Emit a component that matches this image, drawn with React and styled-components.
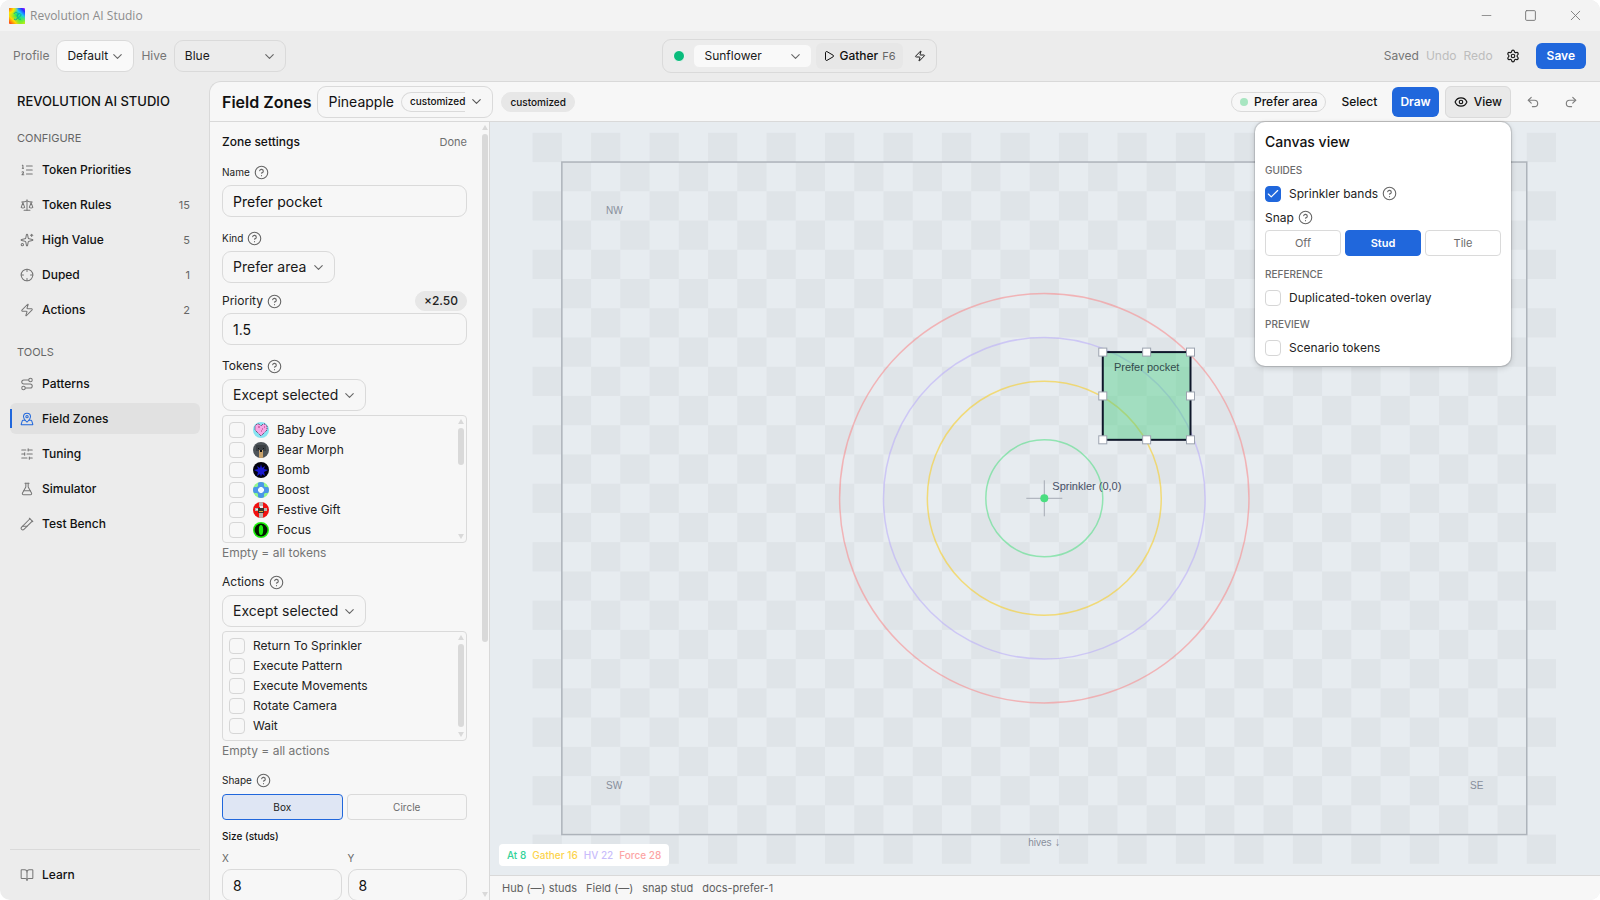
import React, {useState} from 'react';
import styled, {createGlobalStyle} from 'styled-components';
import {
    BookOpen, Check, ChevronDown, CircleQuestionMark, Crosshair, Eye, FlaskConical, ListOrdered, MapPinned,
    Minus, Play, Redo2, Route, Scale, Settings, SlidersHorizontal, Sparkles, Square, TestTubeDiagonal,
    Undo2, X, Zap
} from 'lucide-react';

const GlobalStyle = createGlobalStyle`
  *, *::before, *::after {box-sizing: border-box;}
  html, body {margin: 0; background: #fff;}
  body {
    font-family: Inter, "Liberation Sans", sans-serif;
    font-size: 12px;
    line-height: 16px;
    color: #111;
  }
  h1, h2, h3 {margin: 0; font-weight: 500;}
  p, ul {margin: 0; padding: 0; list-style: none;}
  button, input, select {font: inherit; color: inherit;}
  button {cursor: pointer;}
  a {color: inherit; text-decoration: none;}
  svg {flex: none; display: block;}
`;

const Window = styled.div`
  display: flex;
  flex-direction: column;
  height: 100vh;
  overflow: hidden;
  border-radius: 10px;
  background: #ececec;
`;

const TitleBar = styled.div`
  display: flex;
  align-items: center;
  gap: 5px;
  height: 31px;
  padding: 0 16px 0 9px;
  background: #f3f3f3;
  color: #8c8c8c;
  font-family: "Open Sans", "Noto Sans", sans-serif;
`;

const WindowButtons = styled.div`
  display: flex;
  gap: 30px;
  margin-left: auto;
`;

const WindowButton = styled.button`
  padding: 0;
  border: 0;
  background: none;
  color: #777;
`;

const TopBar = styled.header`
  display: grid;
  grid-template-columns: 1fr auto 1fr;
  align-items: center;
  height: 50px;
  padding: 0 14px 0 13px;
`;

const BarGroup = styled.div`
  display: flex;
  align-items: center;
  gap: 7px;
  color: #757575;
  justify-content: ${p => p.$end ? 'flex-end' : 'flex-start'};
`;

const SelectWrap = styled.span`
  position: relative;
  display: inline-flex;
  align-items: center;
  width: ${p => p.$width || 'auto'};

  svg {
    position: absolute;
    right: 9px;
    color: #666;
    pointer-events: none;
  }
`;

const SelectBox = styled.select`
  appearance: none;
  width: 100%;
  height: ${p => p.$small ? '24px' : '32px'};
  padding: 0 22px 0 10px;
  border: 1px solid ${p => p.$small ? '#ececec' : '#dadada'};
  border-radius: ${p => p.$small ? '6px' : '9px'};
  background: ${p => p.$fill || 'transparent'};
  font-size: ${p => p.$large ? '14px' : '12px'};
  color: #1a1a1a;
`;

const RunGroup = styled.div`
  display: flex;
  align-items: center;
  height: 34px;
  padding: 0 6px 0 10px;
  border: 1px solid #dadada;
  border-radius: 9px;
`;

const StatusDot = styled.span`
  width: 12px;
  height: 12px;
  margin-right: 8px;
  border: 1px solid #f7f7f7;
  border-radius: 50%;
  background: #09bc7c;
`;

const GatherButton = styled.button`
  display: flex;
  align-items: center;
  gap: 4px;
  height: 26px;
  margin: 0 7px 0 4px;
  padding: 0 7px;
  border: 0;
  border-radius: 6px;
  background: #e7e7e7;
  font-weight: 500;

  kbd {
    font: inherit;
    font-size: 11px;
    font-weight: 400;
    color: #666;
  }
`;

const IconButton = styled.button`
  display: flex;
  padding: ${p => p.$pad || '4px'};
  border: 0;
  background: none;
  color: ${p => p.$muted ? '#808080' : '#1a1a1a'};
`;

const TextButton = styled.button`
  padding: 0;
  border: 0;
  background: none;
  color: ${p => p.disabled ? '#bdbdbd' : '#6f6f6f'};
`;

const PrimaryButton = styled.button`
  height: ${p => p.$tall ? '30px' : '26px'};
  padding: 0 ${p => p.$tall ? '8px' : '11px'};
  border: 0;
  border-radius: 6px;
  background: #2067dc;
  color: #fff;
  font-weight: 600;
`;

const Body = styled.div`
  display: flex;
  flex: 1;
  min-height: 0;
`;

const Sidebar = styled.nav`
  display: flex;
  flex-direction: column;
  width: 209px;
  padding: 12px 9px 10px 10px;
`;

const Brand = styled.h2`
  margin: 0 7px 21px;
  font-size: 13px;
  font-weight: 500;
  line-height: 16px;
  white-space: nowrap;
  color: #111;
`;

const NavHeading = styled.h3`
  margin: 0 7px 8px;
  font-size: 11px;
  font-weight: 400;
  color: #666;
`;

const NavList = styled.ul`
  display: flex;
  flex-direction: column;
  gap: 4px;
  margin-bottom: 19px;
`;

const NavLink = styled.a`
  position: relative;
  display: flex;
  align-items: center;
  gap: 8px;
  height: 31px;
  padding: 0 10px;
  border-radius: 6px;
  background: ${p => p.$active ? '#e1e1e1' : 'transparent'};
  font-weight: 500;

  svg {color: ${p => p.$active ? '#2067dc' : '#757575'};}

  &::before {
    content: '';
    display: ${p => p.$active ? 'block' : 'none'};
    position: absolute;
    left: 0;
    width: 2px;
    height: 19px;
    background: #2067dc;
  }

  small {
    margin-left: auto;
    font-size: 11px;
    font-weight: 400;
    color: #666;
  }
`;

const NavFooter = styled.div`
  margin-top: auto;
  padding-top: 9px;
  border-top: 1px solid #dadada;
`;

const Workspace = styled.main`
  display: flex;
  flex-direction: column;
  flex: 1;
  min-width: 0;
  border: solid #d9d9d9;
  border-width: 1px 0 0 1px;
  border-top-left-radius: 12px;
  background: #f7f7f7;
`;

const Toolbar = styled.div`
  display: flex;
  align-items: center;
  height: 40px;
  padding: 0 10px 0 12px;
  border-bottom: 1px solid #d9d9d9;

  h1 {
    margin-right: 6px;
    font-size: 16px;
    font-weight: 600;
    line-height: 20px;
  }
`;

const FieldPicker = styled.button`
  display: flex;
  align-items: center;
  width: 176px;
  height: 32px;
  padding: 0 8px 0 10px;
  border: 1px solid #dadada;
  border-radius: 9px;
  background: none;
  font-size: 14px;

  svg {margin-left: auto; color: #555;}
`;

const PickerTag = styled.span`
  height: 20px;
  margin-left: 7px;
  padding-left: 8px;
  border: 1px solid #dadada;
  border-right: 0;
  border-radius: 10px 0 0 10px;
  font-size: 10px;
  font-weight: 500;
  line-height: 16px;
`;

const Pill = styled.span`
  display: inline-flex;
  align-items: center;
  gap: 6px;
  height: 20px;
  padding: 0 8px;
  border: 1px solid ${p => p.$outline ? '#dadada' : '#e7e7e7'};
  border-radius: 10px;
  background: ${p => p.$outline ? 'transparent' : '#e7e7e7'};
  font-size: ${p => p.$small ? '10px' : '12px'};
  font-weight: 500;
`;

const TagSlot = styled.span`
  display: flex;
  margin-left: 8px;
`;

const KindDot = styled.span`
  width: 8px;
  height: 8px;
  border-radius: 50%;
  background: #a8e6c1;
`;

const Tools = styled.div`
  display: flex;
  align-items: center;
  margin-left: auto;
`;

const ModeButton = styled.button`
  margin: 0 7px;
  padding: 8px;
  border: 0;
  background: none;
  font-weight: 500;
`;

const ViewAnchor = styled.div`
  position: relative;
  margin: 0 3px 0 6px;
`;

const ViewButton = styled.button`
  display: flex;
  align-items: center;
  gap: 6px;
  height: 32px;
  padding: 0 8px;
  border: 1px solid #dadada;
  border-radius: 6px;
  background: #e9e9e9;
  font-weight: 500;
`;

const Popover = styled.section`
  position: absolute;
  top: 36px;
  right: 0;
  z-index: 2;
  width: 256px;
  padding: 10px;
  border-radius: 10px;
  background: #fff;
  box-shadow: 0 0 1px 1px rgba(0, 0, 0, .14), 0 2px 6px rgba(0, 0, 0, .16);

  h2 {font-size: 14px; line-height: 20px;}
  h3 {margin: 10px 0 8px; font-size: 10px; color: #6b6b6b;}
`;

const SnapLabel = styled.div`
  display: flex;
  align-items: center;
  gap: 4px;
  margin-top: 8px;
  color: #222;

  svg {color: #666;}
`;

const Segments = styled.div`
  display: flex;
  gap: 4px;
  margin-top: ${p => p.$gap || '4px'};
`;

const Segment = styled.button`
  flex: 1;
  height: 26px;
  padding: 0;
  border: 1px solid ${p => p.$tone ? '#2067dc' : '#dadada'};
  border-radius: 4px;
  background: ${p => p.$tone === 'solid' ? '#2067dc' : p.$tone === 'soft' ? '#dfe6f4' : 'transparent'};
  color: ${p => p.$tone === 'solid' ? '#fff' : p.$tone ? '#222' : '#6b6b6b'};
  font-size: ${p => p.$small ? '10px' : '11px'};
  font-weight: ${p => p.$tone === 'solid' ? 600 : 400};
`;

const Split = styled.div`
  display: flex;
  flex: 1;
  min-height: 0;
`;

const Panel = styled.aside`
  display: flex;
  width: 280px;
  border-right: 1px solid #d9d9d9;
`;

const PanelBody = styled.div`
  flex: 1;
  min-width: 0;
  padding: 10px 13px 10px 12px;
  overflow: hidden;
`;

const PanelHead = styled.div`
  display: flex;
  justify-content: space-between;
  margin-bottom: 12px;
  line-height: 20px;

  h2 {font-size: 12px;}
  button {font-size: 11px;}
`;

const PanelSub = styled.h3`
  font-size: 10px;
`;

const Field = styled.div`
  margin-top: ${p => p.$tight ? '8px' : '13px'};

  ${PanelHead} + & {margin-top: 0;}
`;

const LabelRow = styled.div`
  display: flex;
  align-items: center;
  gap: 4px;
  min-height: 16px;
  margin-bottom: ${p => p.$tight ? '2px' : '5px'};
  font-size: ${p => p.$small ? '10px' : '12px'};
  color: #222;

  svg {color: #666;}
  ${Pill} {margin-left: auto;}
`;

const TextInput = styled.input`
  display: block;
  width: 100%;
  min-width: 0;
  height: 32px;
  padding: 0 10px;
  border: 1px solid #dadada;
  border-radius: 9px;
  background: transparent;
  font-size: 14px;
  outline: none;
`;

const ListBox = styled.div`
  display: flex;
  max-height: 128px;
  margin: 4px 0 2px;
  border: 1px solid #dadada;
  border-radius: 4px;

  ul {flex: 1; padding: 4px 6px; overflow: hidden;}
`;

const Row = styled.label`
  display: flex;
  align-items: center;
  gap: 8px;
  height: ${p => p.$short ? '16px' : '20px'};
  color: #222;
`;

const TickWrap = styled.span`
  position: relative;
  display: inline-flex;
  align-items: center;
  justify-content: center;
  width: 16px;
  height: 16px;

  svg {position: absolute; color: #fff; pointer-events: none;}
`;

const Tick = styled.input`
  appearance: none;
  width: 16px;
  height: 16px;
  margin: 0;
  border: 1px solid #d6d6d6;
  border-radius: 4px;

  &:checked {border-color: #2067dc; background: #2067dc;}
`;

const SmallHelp = styled.span`
  margin-left: -4px;
  color: #666;
`;

const Hint = styled.p`
  color: #757575;
`;

const Pair = styled.div`
  display: grid;
  grid-template-columns: 1fr 1fr;
  gap: 6px;
  margin-top: 6px;

  label {display: block; margin-bottom: 3px; font-size: 10px; color: #666;}
`;

const Rail = styled.div`
  display: flex;
  flex-direction: column;
  align-items: center;
  width: ${p => p.$inset ? '11px' : '9px'};
  padding: 3px 0;
`;

const Thumb = styled.span`
  width: 6px;
  height: ${p => p.$size};
  margin: 4px 0 auto;
  border-radius: 3px;
  background: #d9d9d9;
`;

const Arrow = styled.span`
  border: 3px solid transparent;
  border-top: ${p => p.$up ? '0' : '5px solid #d9d9d9'};
  border-bottom: ${p => p.$up ? '5px solid #d9d9d9' : '0'};
`;

const Stage = styled.div`
  display: flex;
  flex-direction: column;
  flex: 1;
  min-width: 0;
`;

const CanvasArea = styled.div`
  position: relative;
  flex: 1;
  min-height: 0;
  background: #e7ecf0;

  > svg {width: 100%; height: 100%;}
  text {font-family: "Liberation Sans", Arial, sans-serif;}
`;

const Legend = styled.div`
  position: absolute;
  left: 9px;
  bottom: 9px;
  display: flex;
  gap: 6px;
  padding: 3px 8px;
  border-radius: 4px;
  background: #fff;
  font-size: 10px;
  font-weight: 500;
`;

const LegendItem = styled.span`
  color: ${p => p.$color};
`;

const StatusBar = styled.footer`
  display: flex;
  align-items: center;
  gap: 9px;
  height: 25px;
  padding: 0 12px;
  border-top: 1px solid #d9d9d9;
  font-size: 11px;
  color: #5f5f5f;
`;

const bands = [
    {name: 'At', studs: 8, stroke: '#4ade80', text: '#34d399'},
    {name: 'Gather', studs: 16, stroke: '#facc15', text: '#fcd34d'},
    {name: 'HV', studs: 22, stroke: '#b8a9fa', text: '#c9bdfb'},
    {name: 'Force', studs: 28, stroke: '#f98587', text: '#fca5a5'},
];

const configure = [
    {label: 'Token Priorities', icon: ListOrdered},
    {label: 'Token Rules', icon: Scale, count: 15},
    {label: 'High Value', icon: Sparkles, count: 5},
    {label: 'Duped', icon: Crosshair, count: 1},
    {label: 'Actions', icon: Zap, count: 2},
];

const tools = [
    {label: 'Patterns', icon: Route},
    {label: 'Field Zones', icon: MapPinned, active: true},
    {label: 'Tuning', icon: SlidersHorizontal},
    {label: 'Simulator', icon: FlaskConical},
    {label: 'Test Bench', icon: TestTubeDiagonal},
];

const actions = ['Return To Sprinkler', 'Execute Pattern', 'Execute Movements', 'Rotate Camera', 'Wait'];

const tokens = [
    {
        name: 'Baby Love', bg: '#86e3f2', art: <>
            <path d="M8 14 2 8V4l2-2h2l2 2 2-2h2l2 2v4z" fill="#f7a6e4" stroke="#4a2b55" strokeDasharray="1 1"/>
            <path d="M5 5h2M9 7h1M8 9h1M11 5h1" stroke="#b0397f"/>
        </>
    },
    {
        name: 'Bear Morph', bg: '#4d5358', art: <>
            <path d="M3 3h10v6H3z" fill="#3a3f43"/>
            <path d="M6 8h4v8H6z" fill="#c9a26b"/>
            <path d="M7 8h2v2H7zM5 6h1v1H5zM10 6h1v1h-1z" fill="#111"/>
        </>
    },
    {
        name: 'Bomb', bg: '#02020c', art: (
            <path d="M8 2l1 4 3-2-1 3 4 1-4 2 1 4-3-2-1 3-1-3-3 2 1-4-4-2 4-1-1-3 3 2z" fill="#1a1ad0"/>
        )
    },
    {
        name: 'Boost', bg: '#90f58d', art: <>
            <path d="M6 0h4l1 1v3l1 1h3l1 1v4l-1 1h-3l-1 1v3l-1 1H6l-1-1v-3l-1-1H1l-1-1V6l1-1h3l1-1V1z"
                  fill="#4b96e8"/>
            <path d="M7 5h2l2 2v2l-2 2H7L5 9V7z" fill="#f2fbff"/>
        </>
    },
    {
        name: 'Festive Gift', bg: '#f01010', art: <>
            <path d="M6 0h4v5H6zM2 6h4v3H2zM10 6h4v3h-4zM6 11h4v5H6z" fill="#b5b4b1"/>
            <path d="M5 6h6v5H5z" fill="#38352f"/>
            <path d="M6 9h4v1H6z" fill="#e2b33a"/>
            <path d="M7 4h3v2H7zM3 7h2v1H3z" fill="#eee"/>
        </>
    },
    {
        name: 'Focus', bg: '#1df20c', art: <>
            <circle cx="8" cy="8" r="6.5" fill="#041a02"/>
            <ellipse cx="8" cy="8" rx="2.2" ry="5" fill="#1df20c"/>
        </>
    },
];

const TokenIcon = ({id, bg, art}) => (
    <svg width="16" height="16" viewBox="0 0 16 16" fill="none" aria-hidden="true">
        <clipPath id={id}><circle cx="8" cy="8" r="8"/></clipPath>
        <g clipPath={`url(#${id})`}>
            <rect width="16" height="16" fill={bg}/>
            {art}
        </g>
    </svg>
);

const AppIcon = () => (
    <svg width="16" height="16" viewBox="0 0 16 16" fill="none" aria-hidden="true">
        <defs>
            <linearGradient id="rainbow" x1="0" y1="1" x2="1" y2="0">
                <stop offset="0" stopColor="#ff2a1a"/>
                <stop offset=".25" stopColor="#ffd800"/>
                <stop offset=".5" stopColor="#22f05a"/>
                <stop offset=".7" stopColor="#18c8ff"/>
                <stop offset=".88" stopColor="#2a2cff"/>
                <stop offset="1" stopColor="#d01cff"/>
            </linearGradient>
            <radialGradient id="warm" cx="0" cy="0" r=".6">
                <stop offset="0" stopColor="#ff5a10"/>
                <stop offset=".5" stopColor="#ffe600"/>
                <stop offset="1" stopColor="#ffe600" stopOpacity="0"/>
            </radialGradient>
            <radialGradient id="lime" cx="1" cy="1" r=".6">
                <stop offset="0" stopColor="#e8f000"/>
                <stop offset="1" stopColor="#3cf03c" stopOpacity="0"/>
            </radialGradient>
        </defs>
        <rect width="16" height="16" rx="1" fill="url(#rainbow)"/>
        <rect width="16" height="16" rx="1" fill="url(#warm)"/>
        <rect width="16" height="16" rx="1" fill="url(#lime)"/>
        <path d="M5 6a2 2 0 1 1 3 2 2 2 0 1 1-3 3M8 8c1-3 4-3 4-1s-3 2-3 3 2 2 3 1" stroke="#0fae9c"/>
    </svg>
);

const Help = () => <CircleQuestionMark size={15} strokeWidth={1.75} aria-hidden="true"/>;

const Dropdown = ({id, label, value, width, ...rest}) => (
    <SelectWrap $width={width}>
        <SelectBox id={id} aria-label={label} defaultValue={value} {...rest}>
            <option>{value}</option>
        </SelectBox>
        <ChevronDown size={15} strokeWidth={1.75}/>
    </SelectWrap>
);

const CheckRow = ({label, checked, icon, extra, short}) => {
    const [on, setOn] = useState(!!checked);
    return (
        <Row $short={short}>
            <TickWrap>
                <Tick type="checkbox" checked={on} onChange={e => setOn(e.target.checked)}/>
                {on && <Check size={14} strokeWidth={2}/>}
            </TickWrap>
            {icon}
            <span>{label}</span>
            {extra}
        </Row>
    );
};

const Scrollbar = ({size, inset}) => (
    <Rail $inset={inset}>
        <Arrow $up/>
        <Thumb $size={size}/>
        <Arrow/>
    </Rail>
);

const NavGroup = ({items}) => (
    <NavList>
        {items.map(({label, icon: Icon, count, active}) => (
            <li key={label}>
                <NavLink href="#" $active={active}>
                    <Icon size={14} strokeWidth={1.75}/>
                    {label}
                    {count && <small>{count}</small>}
                </NavLink>
            </li>
        ))}
    </NavList>
);

const STUD = 7.31;
const TILE = STUD * 4;
const CX = 554.3;
const CY = 376.3;

const FieldMap = () => {
    const left = CX - TILE * 16.5;
    const top = CY - TILE * 11.5;
    const box = {x: CX + STUD * 8, y: CY - STUD * 20, size: STUD * 12};
    const steps = [0, .5, 1];

    const tiles = [];
    for (let r = 0; r < 25; r++) {
        for (let c = r % 2; c < 35; c += 2) {
            tiles.push(<rect key={`${r}-${c}`} x={left + (c - 1) * TILE} y={top + (r - 1) * TILE}
                             width={TILE} height={TILE}/>);
        }
    }

    return (
        <svg viewBox="0 0 1110 753" role="img" aria-label="Field map">
            <g fill="#dfe4e8">{tiles}</g>
            <rect x={left} y={top} width={TILE * 33} height={TILE * 23} fill="none" stroke="#adb3ba"
                  strokeWidth="1.5"/>
            <g fill="none" strokeWidth="1.5" strokeOpacity=".55">
                {bands.map(b => <circle key={b.name} cx={CX} cy={CY} r={b.studs * STUD} stroke={b.stroke}/>)}
            </g>
            <path d={`M${CX - 18} ${CY}h36M${CX} ${CY - 18}v36`} stroke="#a5abb5"/>
            <circle cx={CX} cy={CY} r="4" fill="#4ade80"/>
            <text x={CX + 8} y={CY - 8} fontSize="11" fill="#475066">Sprinkler (0,0)</text>
            <rect x={box.x} y={box.y} width={box.size} height={box.size} fill="#4ecf86" fillOpacity=".45"
                  stroke="#0f172a" strokeWidth="2"/>
            <text x={box.x + box.size / 2} y={box.y + 19} fontSize="11" fill="#334c4c"
                  textAnchor="middle">Prefer pocket</text>
            {steps.map(sx => steps.map(sy => (sx === .5 && sy === .5) ? null : (
                <rect key={`${sx}${sy}`} x={box.x + box.size * sx - 4} y={box.y + box.size * sy - 4} width="8"
                      height="8" fill="#fff" stroke="#9ca3af"/>
            )))}
            <g fontSize="10" fill="#878e9b">
                <text x="116" y="92">NW</text>
                <text x="116" y="667">SW</text>
                <text x="980" y="667">SE</text>
                <text x={CX} y="724" textAnchor="middle">hives <tspan fontSize="12">↓</tspan></text>
            </g>
        </svg>
    );
};

const ZonePanel = () => (
    <Panel>
        <PanelBody>
            <PanelHead>
                <h2>Zone settings</h2>
                <TextButton type="button">Done</TextButton>
            </PanelHead>
            <Field>
                <LabelRow $small><label htmlFor="name">Name</label><Help/></LabelRow>
                <TextInput id="name" defaultValue="Prefer pocket"/>
            </Field>
            <Field>
                <LabelRow $small><label htmlFor="kind">Kind</label><Help/></LabelRow>
                <Dropdown id="kind" value="Prefer area" width="113px" $large/>
            </Field>
            <Field $tight>
                <LabelRow $tight>
                    <label htmlFor="priority">Priority</label><Help/>
                    <Pill>×2.50</Pill>
                </LabelRow>
                <TextInput id="priority" defaultValue="1.5"/>
            </Field>
            <Field>
                <LabelRow><label htmlFor="tokens">Tokens</label><Help/></LabelRow>
                <Dropdown id="tokens" value="Except selected" width="144px" $large/>
                <ListBox>
                    <ul>
                        {tokens.map((t, i) => (
                            <li key={t.name}>
                                <CheckRow label={t.name} icon={<TokenIcon id={`token${i}`} bg={t.bg} art={t.art}/>}/>
                            </li>
                        ))}
                    </ul>
                    <Scrollbar inset size="37px"/>
                </ListBox>
                <Hint>Empty = all tokens</Hint>
            </Field>
            <Field>
                <LabelRow><label htmlFor="actions">Actions</label><Help/></LabelRow>
                <Dropdown id="actions" value="Except selected" width="144px" $large/>
                <ListBox>
                    <ul>
                        {actions.map(a => <li key={a}><CheckRow label={a}/></li>)}
                    </ul>
                    <Scrollbar inset size="83px"/>
                </ListBox>
                <Hint>Empty = all actions</Hint>
            </Field>
            <Field>
                <LabelRow $small>Shape<Help/></LabelRow>
                <Segments $gap="6px">
                    <Segment type="button" $small $tone="soft">Box</Segment>
                    <Segment type="button" $small>Circle</Segment>
                </Segments>
            </Field>
            <Field $tight>
                <PanelSub>Size (studs)</PanelSub>
                <Pair>
                    <div>
                        <label htmlFor="sizeX">X</label>
                        <TextInput id="sizeX" defaultValue="8"/>
                    </div>
                    <div>
                        <label htmlFor="sizeY">Y</label>
                        <TextInput id="sizeY" defaultValue="8"/>
                    </div>
                </Pair>
            </Field>
        </PanelBody>
        <Scrollbar size="508px"/>
    </Panel>
);

const CanvasView = () => (
    <Popover>
        <h2>Canvas view</h2>
        <h3>GUIDES</h3>
        <CheckRow short checked label="Sprinkler bands" extra={<SmallHelp><Help/></SmallHelp>}/>
        <SnapLabel>Snap<Help/></SnapLabel>
        <Segments>
            <Segment type="button">Off</Segment>
            <Segment type="button" $tone="solid">Stud</Segment>
            <Segment type="button">Tile</Segment>
        </Segments>
        <h3>REFERENCE</h3>
        <CheckRow short label="Duplicated-token overlay"/>
        <h3>PREVIEW</h3>
        <CheckRow short label="Scenario tokens"/>
    </Popover>
);

const App = () => {
    const [viewOpen, setViewOpen] = useState(true);

    return (
        <Window>
            <GlobalStyle/>
            <TitleBar>
                <AppIcon/>
                <span>Revolution AI Studio</span>
                <WindowButtons>
                    <WindowButton aria-label="Minimize"><Minus size={15} strokeWidth={1.25}/></WindowButton>
                    <WindowButton aria-label="Maximize"><Square size={13} strokeWidth={1.75}/></WindowButton>
                    <WindowButton aria-label="Close"><X size={17} strokeWidth={1.25}/></WindowButton>
                </WindowButtons>
            </TitleBar>
            <TopBar>
                <BarGroup>
                    <label htmlFor="profile">Profile</label>
                    <Dropdown id="profile" value="Default" width="78px" $fill="#f9f9f9"/>
                    <label htmlFor="hive">Hive</label>
                    <Dropdown id="hive" value="Blue" width="112px"/>
                </BarGroup>
                <RunGroup>
                    <StatusDot/>
                    <Dropdown label="Field" value="Sunflower" width="119px" $small $fill="#f9f9f9"/>
                    <GatherButton type="button">
                        <Play size={12} strokeWidth={2}/>
                        Gather
                        <kbd>F6</kbd>
                    </GatherButton>
                    <IconButton aria-label="Quick run"><Zap size={12} strokeWidth={2}/></IconButton>
                </RunGroup>
                <BarGroup $end>
                    <span>Saved</span>
                    <TextButton disabled>Undo</TextButton>
                    <TextButton disabled>Redo</TextButton>
                    <IconButton $pad="8px 9px 8px 6px" aria-label="Settings">
                        <Settings size={14} strokeWidth={2}/>
                    </IconButton>
                    <PrimaryButton type="button">Save</PrimaryButton>
                </BarGroup>
            </TopBar>
            <Body>
                <Sidebar>
                    <Brand>REVOLUTION AI STUDIO</Brand>
                    <NavHeading>CONFIGURE</NavHeading>
                    <NavGroup items={configure}/>
                    <NavHeading>TOOLS</NavHeading>
                    <NavGroup items={tools}/>
                    <NavFooter>
                        <NavLink href="#"><BookOpen size={14} strokeWidth={1.75}/>Learn</NavLink>
                    </NavFooter>
                </Sidebar>
                <Workspace>
                    <Toolbar>
                        <h1>Field Zones</h1>
                        <FieldPicker type="button">
                            Pineapple
                            <PickerTag>customized</PickerTag>
                            <ChevronDown size={15} strokeWidth={1.75}/>
                        </FieldPicker>
                        <TagSlot><Pill $small>customized</Pill></TagSlot>
                        <Tools>
                            <Pill $outline><KindDot/>Prefer area</Pill>
                            <ModeButton type="button">Select</ModeButton>
                            <PrimaryButton type="button" $tall>Draw</PrimaryButton>
                            <ViewAnchor>
                                <ViewButton type="button" onClick={() => setViewOpen(!viewOpen)}>
                                    <Eye size={14} strokeWidth={2}/>
                                    View
                                </ViewButton>
                                {viewOpen && <CanvasView/>}
                            </ViewAnchor>
                            <IconButton $pad="8px 12px" $muted aria-label="Undo"><Undo2 size={14}/></IconButton>
                            <IconButton $pad="8px 12px" $muted aria-label="Redo"><Redo2 size={14}/></IconButton>
                        </Tools>
                    </Toolbar>
                    <Split>
                        <ZonePanel/>
                        <Stage>
                            <CanvasArea>
                                <FieldMap/>
                                <Legend>
                                    {bands.map(b => (
                                        <LegendItem key={b.name} $color={b.text}>{b.name} {b.studs}</LegendItem>
                                    ))}
                                </Legend>
                            </CanvasArea>
                            <StatusBar>
                                <span>Hub (—) studs</span>
                                <span>Field (—)</span>
                                <span>snap stud</span>
                                <span>docs-prefer-1</span>
                            </StatusBar>
                        </Stage>
                    </Split>
                </Workspace>
            </Body>
        </Window>
    );
};

export default App;
